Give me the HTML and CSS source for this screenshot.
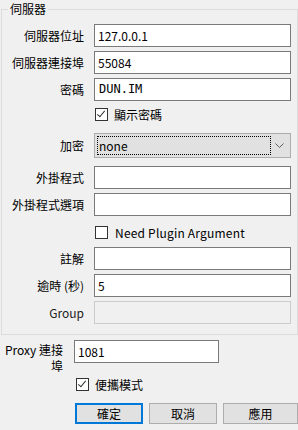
FILE: index.html
```html
<!DOCTYPE html>
<html lang="zh-Hant">
<head>
    <meta charset="UTF-8">
    <meta name="viewport" content="width=device-width, initial-scale=1.0">
    <title>伺服器</title>
    <link rel="stylesheet" href="styles.css">
</head>
<body>
    <div class="group">
        <span class="group-title">伺服器</span>

        <div class="row">
            <label class="label">伺服器位址</label>
            <div class="field">127.0.0.1</div>
        </div>
        <div class="row">
            <label class="label">伺服器連接埠</label>
            <div class="field">55084</div>
        </div>
        <div class="row">
            <label class="label">密碼</label>
            <div class="field mono">DUN.IM</div>
        </div>
        <div class="row check-row first-check">
            <span class="label"></span>
            <span class="box checked"></span>
            <span class="check-text">顯示密碼</span>
        </div>
        <div class="row combo-row">
            <label class="label">加密</label>
            <div class="combo">
                <span class="combo-focus">none</span>
                <svg class="chevron" width="9" height="5" viewBox="0 0 9 5">
                    <path d="M0.5 0.5 L4.5 4.5 L8.5 0.5" fill="none" stroke="#606060" stroke-width="1"/>
                </svg>
            </div>
        </div>
        <div class="row after-combo">
            <label class="label">外掛程式</label>
            <div class="field"></div>
        </div>
        <div class="row">
            <label class="label">外掛程式選項</label>
            <div class="field"></div>
        </div>
        <div class="row check-row second-check">
            <span class="label"></span>
            <span class="box"></span>
            <span class="check-text">Need Plugin Argument</span>
        </div>
        <div class="row after-check">
            <label class="label">註解</label>
            <div class="field"></div>
        </div>
        <div class="row">
            <label class="label">逾時 (秒)</label>
            <div class="field">5</div>
        </div>
        <div class="row">
            <label class="label disabled-label">Group</label>
            <div class="field disabled"></div>
        </div>
    </div>

    <div class="proxy-row">
        <label class="proxy-label">Proxy 連接<br>埠</label>
        <div class="field proxy-field">1081</div>
    </div>

    <div class="portable-row">
        <span class="box checked"></span>
        <span class="check-text">便攜模式</span>
    </div>

    <div class="buttons">
        <button class="btn default">確定</button>
        <button class="btn">取消</button>
        <button class="btn wide">應用</button>
    </div>
</body>
</html>
```

FILE: styles.css
```css
html, body {
    margin: 0;
    padding: 0;
    background: #f0f0f0;
}

body {
    width: 298px;
    height: 430px;
    overflow: hidden;
    font-family: "Noto Sans CJK TC", "Noto Sans", sans-serif;
    font-size: 12px;
    color: #000;
}

/* group box */
.group {
    position: relative;
    margin: 9px 0 0 1px;
    width: 297px;
    height: 326px;
    box-sizing: border-box;
    border: 1px solid #dcdcdc;
    padding: 14px 0 0 0;
}

.group-title {
    position: absolute;
    top: -8px;
    left: 6px;
    padding: 0 2px;
    background: #f0f0f0;
    line-height: 14px;
}

.row {
    display: flex;
    align-items: center;
    height: 23px;
    margin-top: 4px;
}

.row:nth-child(2) {
    margin-top: 0;
}

.label {
    width: 82px;
    flex: none;
    text-align: right;
    padding-right: 10px;
    white-space: nowrap;
}

.disabled-label {
    color: #222;
}

.field {
    width: 197px;
    height: 23px;
    box-sizing: border-box;
    border: 1px solid #7a7a7a;
    background: #fff;
    padding: 0 3px;
    line-height: 21px;
    white-space: nowrap;
}

.field.mono {
    font-family: "DejaVu Sans Mono", "Liberation Mono", monospace;
    font-size: 12px;
    padding-left: 4px;
}

.field.disabled {
    background: #f0f0f0;
    border-color: #cccccc;
}

/* checkboxes */
.check-row {
    height: 13px;
}

.first-check {
    margin-top: 7px;
}

.second-check {
    margin-top: 10px;
}

.box {
    width: 13px;
    height: 13px;
    box-sizing: border-box;
    border: 1px solid #333;
    background: #fff;
    flex: none;
    margin-left: 1px;
    position: relative;
}

.box.checked::after {
    content: "";
    position: absolute;
    left: 3px;
    top: 0px;
    width: 3px;
    height: 7px;
    border: solid #333;
    border-width: 0 1px 1px 0;
    transform: rotate(40deg);
}

.check-text {
    margin-left: 6px;
    white-space: nowrap;
    line-height: 13px;
}

.second-check .check-text {
    margin-left: 7px;
    letter-spacing: 0.2px;
}

/* combo */
.combo-row {
    height: 25px;
    margin-top: 12px;
}

.combo {
    width: 197px;
    height: 25px;
    box-sizing: border-box;
    border: 1px solid #adadad;
    background: #e1e1e1;
    display: flex;
    align-items: center;
    padding: 0 6px 0 2px;
}

.combo-focus {
    width: 174px;
    height: 19px;
    box-sizing: border-box;
    border: 1px dotted #000;
    line-height: 17px;
    padding-left: 1px;
}

.chevron {
    margin-left: auto;
}

.after-combo {
    margin-top: 8px;
}

.after-check {
    margin-top: 8px;
}

/* below group */
.proxy-row {
    display: flex;
    align-items: flex-start;
    margin-top: 5px;
    height: 34px;
}

.proxy-label {
    width: 63px;
    text-align: right;
    line-height: 16px;
    padding-top: 2px;
    margin-right: 10px;
    flex: none;
}

.proxy-field {
    width: 145px;
    margin-left: 1px;
}

.portable-row {
    display: flex;
    align-items: center;
    height: 13px;
    margin-top: 4px;
    padding-left: 75px;
}

.buttons {
    display: flex;
    gap: 6px;
    margin-top: 12px;
    padding-left: 75px;
}

.btn {
    height: 21px;
    width: 68px;
    box-sizing: border-box;
    border: 1px solid #adadad;
    background: #e1e1e1;
    font-family: "Noto Sans CJK TC", "Noto Sans", sans-serif;
    font-size: 12px;
    color: #000;
    padding: 0;
    line-height: 19px;
}

.btn.default {
    border: 2px solid #0078d7;
    line-height: 17px;
}

.btn.wide {
    width: 75px;
}
```
